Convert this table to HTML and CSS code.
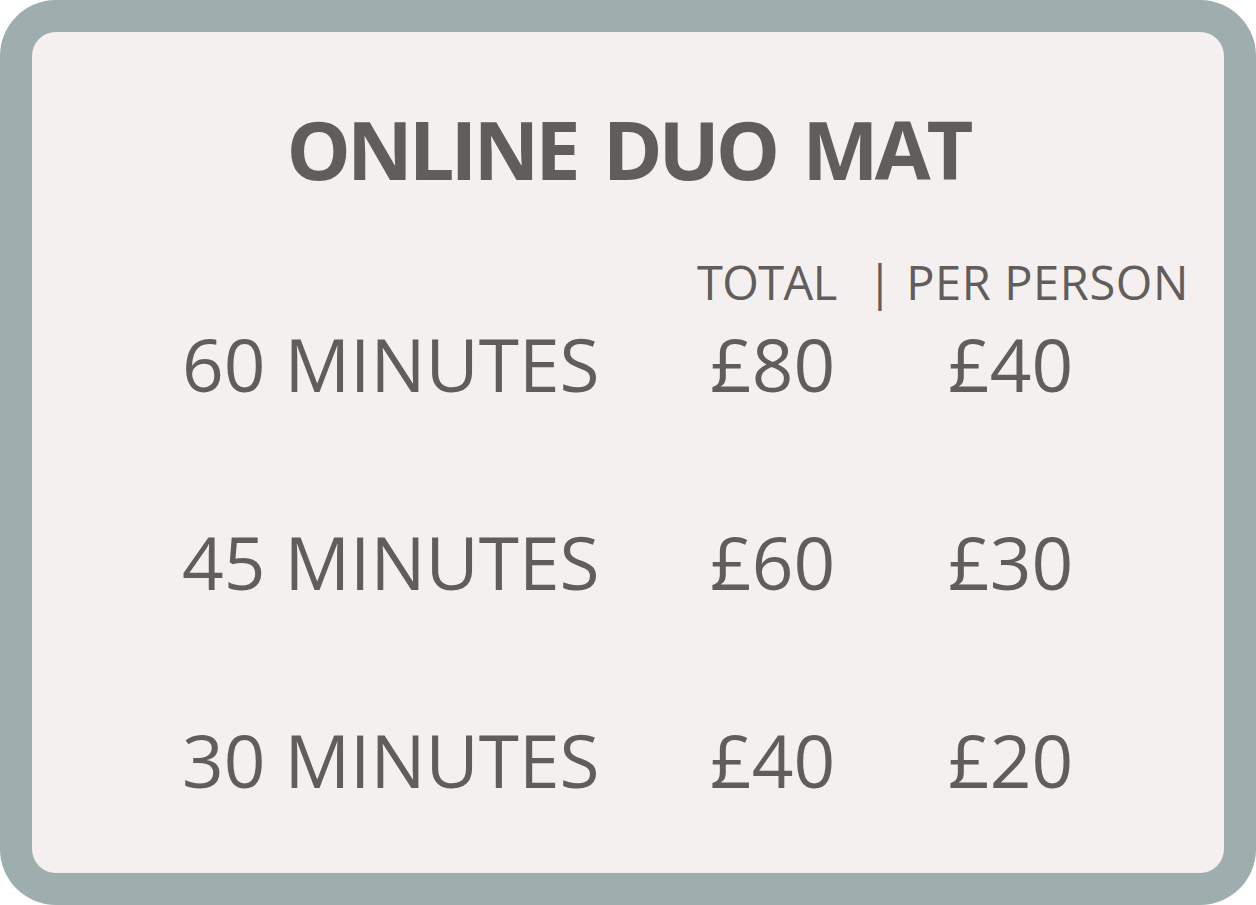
FILE: index.html
```html
<!DOCTYPE html>
<html lang="en">
<head>
  <meta charset="UTF-8">
  <title>Online Duo Mat</title>
  <link rel="stylesheet" href="styles.css">
</head>
<body>
  <div class="frame">
    <div class="card">
      <h1 class="title">ONLINE DUO MAT</h1>
      <div class="prices">
        <div class="head"></div>
        <div class="head">TOTAL</div>
        <div class="head split">| PER PERSON</div>

        <div class="label">60 MINUTES</div>
        <div class="price total">£80</div>
        <div class="price each">£40</div>

        <div class="label">45 MINUTES</div>
        <div class="price total">£60</div>
        <div class="price each">£30</div>

        <div class="label">30 MINUTES</div>
        <div class="price total">£40</div>
        <div class="price each">£20</div>
      </div>
    </div>
  </div>
</body>
</html>
```

FILE: styles.css
```css
body {
  margin: 0;
  font-family: "Open Sans", "Noto Sans", sans-serif;
  color: #615d5c;
  background: #fff;
}
.frame {
  width: 1256px;
  height: 905px;
  box-sizing: border-box;
  padding: 32px;
  background: #9eadad;
  border-radius: 56px;
}
.card {
  height: 100%;
  background: #f4f0ef;
  border-radius: 24px;
  padding-top: 76px;
  box-sizing: border-box;
}
.title {
  margin: 0;
  font-size: 81px;
  font-weight: 700;
  line-height: 1;
  letter-spacing: -4px;
  word-spacing: 9px;
  text-align: center;
}
.prices {
  display: grid;
  grid-template-columns: 515px 181px auto;
  padding-left: 150px;
  margin-top: 70px;
}
.head {
  font-size: 47px;
  line-height: 1;
  letter-spacing: -0.6px;
  margin-bottom: 21px;
}
.head.split {
  margin-left: -11px;
  letter-spacing: 0.6px;
}
.label,
.price {
  font-size: 73px;
  line-height: 1;
  margin-bottom: 125px;
}
.price.total {
  padding-left: 13px;
}
.price.each {
  padding-left: 70px;
}
```
